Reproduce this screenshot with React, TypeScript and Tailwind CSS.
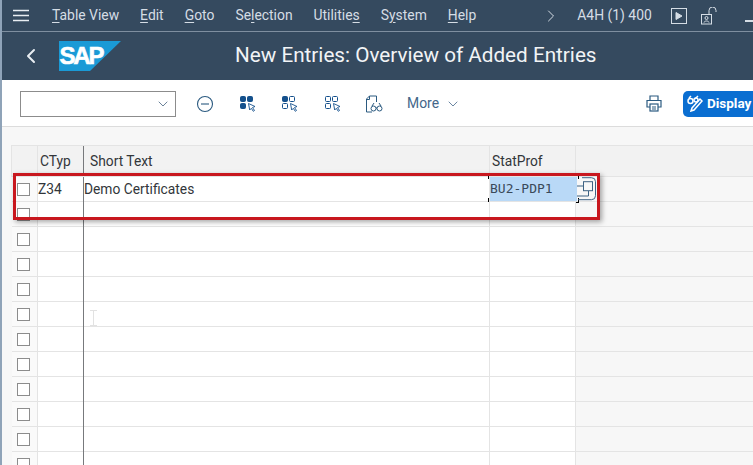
import { ChevronLeft, ChevronRight, ChevronDown } from 'lucide-react'

const menus = [
  { pre: '', u: 'T', post: 'able View' },
  { pre: '', u: 'E', post: 'dit' },
  { pre: '', u: 'G', post: 'oto' },
  { pre: 'Se', u: 'l', post: 'ection' },
  { pre: 'Utilitie', u: 's', post: '' },
  { pre: 'S', u: 'y', post: 'stem' },
  { pre: '', u: 'H', post: 'elp' },
]

function SelectIcon({ filled }: { filled: number[] }) {
  return (
    <svg width="18" height="18" viewBox="0 0 18 18" fill="none" stroke="#14508c" strokeWidth="1">
      {[[1.5, 1.5], [8.5, 1.5], [1.5, 8.5]].map(([x, y], i) => (
        <rect key={i} x={x} y={y} width="5" height="5" rx="1" fill={filled.includes(i) ? '#14508c' : 'none'} />
      ))}
      <path d="M9.500 8.500l6.500 3-2.500 1 2 3-1.200.8-2-3-1.600 1.700z" fill="#fff" strokeWidth="0.9" />
    </svg>
  )
}

function Checkbox() {
  return <div className="w-[13px] h-[13px] border border-[#8c8c8c] bg-white" />
}

function Row({ ctyp, text, selected }: { ctyp?: string; text?: string; selected?: boolean }) {
  return (
    <div className="relative flex h-[25px] border-b border-[#e4e4e4]">
      <div className="w-[26px] shrink-0 flex items-center justify-center pr-[2px] bg-[#fafafa] border-r border-[#e4e4e4]">
        <Checkbox />
      </div>
      <div className="w-[46px] shrink-0 leading-[24px] text-[13.8px] text-[#32363a] bg-white border-r border-[#77797c]">{ctyp}</div>
      <div className="w-[406px] shrink-0 leading-[24px] text-[13.8px] text-[#32363a] bg-white border-r border-[#e4e4e4]">{text}</div>
      <div className="w-[86px] shrink-0 relative bg-white border-r border-[#e4e4e4]">
        {selected && (
          <div className="absolute left-0 top-0 w-[87px] h-[24px] flex items-center bg-[#b9d9f7] font-['DejaVu_Sans_Mono',monospace] text-[13px] text-[#3a4a5a]">
            BU2-PDP1
          </div>
        )}
        {selected && (
          <>
            <span className="absolute -left-[2px] -top-[3px] w-[5px] h-[5px] border-l border-t border-black" />
            <span className="absolute -left-[2px] top-[21px] w-[5px] h-[5px] border-l border-b border-black" />
            <span className="absolute left-[84px] -top-[3px] w-[5px] h-[5px] border-r border-t border-black" />
            <span className="absolute left-[84px] top-[21px] w-[5px] h-[5px] border-r border-b border-black" />
            <svg width="20" height="24" viewBox="0 0 20 24" fill="none" stroke="#3d6283" className="absolute left-[87px] top-0">
              <path d="M5 .7h9.500a4 4 0 0 1 4 4v14a4 4 0 0 1-4 4H1" />
              <rect x="6.500" y="4.700" width="9" height="9" />
              <path d="M6 9H0M0 19h11.500v-5" />
            </svg>
          </>
        )}
      </div>
      <span className="absolute left-[71px] top-0 -bottom-[1px] w-px bg-[#77797c]" />
    </div>
  )
}

export default function App() {
  return (
    <div className="w-[753px] h-[465px] overflow-hidden relative bg-[#f7f7f7] font-['Roboto',sans-serif] border-l-[2px] border-[#8fa3b8]">
      {/* Menu bar */}
      <div className="-ml-[2px] h-[32px] bg-[#354a5f] border-b border-[#7f8fa0] flex items-center text-[13.9px] text-[#d5dde5]">
        <svg width="16" height="13" viewBox="0 0 16 13" className="ml-[13px] shrink-0" stroke="#e8edf2" strokeWidth="1.5">
          <path d="M0 1.500h16M0 6.500h16M0 11.500h16" />
        </svg>
        <div className="flex ml-[23px] gap-[21px] whitespace-nowrap">
          {menus.map((m) => (
            <span key={m.post + m.u}>
              {m.pre}
              <span className="underline underline-offset-2">{m.u}</span>
              {m.post}
            </span>
          ))}
        </div>
        <ChevronRight size={20} strokeWidth={1.2} className="ml-[65px] shrink-0" />
        <span className="ml-[16px] whitespace-nowrap">A4H (1) 400</span>
        <svg width="16" height="16" viewBox="0 0 16 16" fill="none" stroke="#d5dde5" className="ml-[19px] shrink-0">
          <rect x="0.5" y="0.5" width="15" height="15" />
          <path d="M5 4.500l6 3.500-6 3.500z" fill="#d5dde5" />
        </svg>
        <svg width="17" height="18" viewBox="0 0 17 18" fill="none" stroke="#d5dde5" className="ml-[14px] shrink-0">
          <rect x="0.5" y="7.500" width="10" height="9.500" />
          <circle cx="5.500" cy="11" r="1.500" />
          <path d="M3 15.500c.5-2 4.500-2 5 0M8 7V3.500a3.500 3.500 0 0 1 7 0V5" />
        </svg>
        <span className="ml-[27px] w-[10px] h-[2px] bg-[#d5dde5] mt-[11px]" />
      </div>

      {/* Title bar */}
      <div className="-ml-[2px] h-[48px] bg-[#354a5f] flex items-center relative">
        <ChevronLeft size={24} strokeWidth={2} className="text-[#e8edf2] ml-[19px] shrink-0" />
        <svg width="62" height="30" viewBox="0 0 62 30" className="ml-[16px] -mt-[1px] shrink-0">
          <path d="M0 0h62L31 30H0z" fill="#1a9ad6" />
          <text x="0.500" y="23" fontFamily="'Liberation Sans', sans-serif" fontWeight="700" fontSize="24" letterSpacing="-2.200" fill="#fff" stroke="#fff" strokeWidth="0.6">SAP</text>
        </svg>
        <div className="ml-[114px] text-[20.7px] text-[#f2f4f6] whitespace-nowrap">New Entries: Overview of Added Entries</div>
      </div>

      {/* Toolbar */}
      <div className="-ml-[2px] h-[47px] bg-white border-b border-[#dcdcdc] flex items-center pt-[1px]">
        <div className="ml-[20px] w-[156px] h-[26px] border border-[#8c8c8c] flex items-center justify-end pr-[4px] shrink-0">
          <ChevronDown size={16} strokeWidth={1.2} className="text-[#44627f]" />
        </div>
        <svg width="18" height="18" viewBox="0 0 18 18" fill="none" stroke="#2b5a80" strokeWidth="1.1" className="ml-[20px] shrink-0">
          <circle cx="9" cy="9" r="7.500" />
          <path d="M5 9h8" />
        </svg>
        <div className="ml-[25px] shrink-0"><SelectIcon filled={[0, 1, 2]} /></div>
        <div className="ml-[24px] shrink-0"><SelectIcon filled={[0]} /></div>
        <div className="ml-[25px] shrink-0"><SelectIcon filled={[]} /></div>
        <svg width="18" height="18" viewBox="0 0 18 18" fill="none" stroke="#2b5a80" className="ml-[23px] shrink-0">
          <path d="M7 17H1.500V4l3-3h7v6" />
          <path d="M4.500 1v3.500h-3" />
          <circle cx="8.500" cy="13.500" r="2.500" />
          <circle cx="14.500" cy="13.500" r="2.500" />
          <path d="M11 13h1M7 11l2-3M16 11l-2-3" />
        </svg>
        <span className="ml-[24px] text-[13.9px] text-[#44678a] whitespace-nowrap">More</span>
        <ChevronDown size={16} strokeWidth={1.2} className="text-[#44678a] ml-[6px] shrink-0" />
        <svg width="16" height="17" viewBox="0 0 16 17" fill="none" stroke="#2b5a80" strokeWidth="1.2" className="ml-[185px] shrink-0">
          <path d="M4 5V1h8v4M4 12H1V5.500h14V12h-3" />
          <rect x="4" y="9" width="8" height="7" />
          <path d="M6 12h4M6 14h4" />
        </svg>
        <div className="ml-[21px] w-[90px] h-[26px] shrink-0 rounded-l-[5px] bg-[#0a6ed1] flex items-center pl-[4px] text-[13.5px] font-bold text-white whitespace-nowrap">
          <svg width="17" height="17" viewBox="0 0 17 17" fill="none" stroke="#fff" strokeWidth="1.500" className="shrink-0 mr-[3px]">
            <circle cx="3.500" cy="6" r="2.500" />
            <path d="M2 3l2-2M8 4l3-3" />
            <circle cx="9" cy="5" r="2" />
            <path d="M15 6l-8 9-3 1 1-3 8-9z" />
          </svg>
          Display
        </div>
      </div>

      {/* Table */}
      <div className="pl-[9px] pt-[18px]">
        <div className="flex h-[32px] text-[13.8px] text-[#32363a] border-y border-[#e4e4e4] bg-[#f2f2f2] w-[744px]">
          <div className="w-[27px] shrink-0 border-l border-r border-[#e4e4e4]" />
          <div className="w-[46px] shrink-0 pl-[2px] leading-[31px] border-r border-[#77797c]">CTyp</div>
          <div className="w-[406px] shrink-0 pl-[6px] leading-[31px] border-r border-[#e4e4e4]">Short Text</div>
          <div className="w-[86px] shrink-0 pl-[2px] leading-[31px] border-r border-[#e4e4e4]">StatProf</div>
        </div>
        <div className="relative w-[742px]">
          <div className="pl-[1px]">
            <Row ctyp="Z34" text="Demo Certificates" selected />
            <Row />
            <Row />
            <Row />
            <Row />
            <Row />
            <Row />
            <Row />
            <Row />
            <Row />
            <Row />
            <Row />
          </div>
          {/* red annotation box */}
          <div className="absolute left-[2px] -top-[4px] w-[587px] h-[47px] border-[3px] border-[#c8171e] shadow-[2px_2px_5px_rgba(0,0,0,0.35)]" />
          {/* text cursor */}
          <svg width="7" height="16" viewBox="0 0 7 16" fill="none" stroke="#e2e2e2" className="absolute left-[79px] top-[133px]">
            <path d="M0 .5h7M0 15.500h7M3.500 .5v15" />
          </svg>
        </div>
      </div>
    </div>
  )
}
